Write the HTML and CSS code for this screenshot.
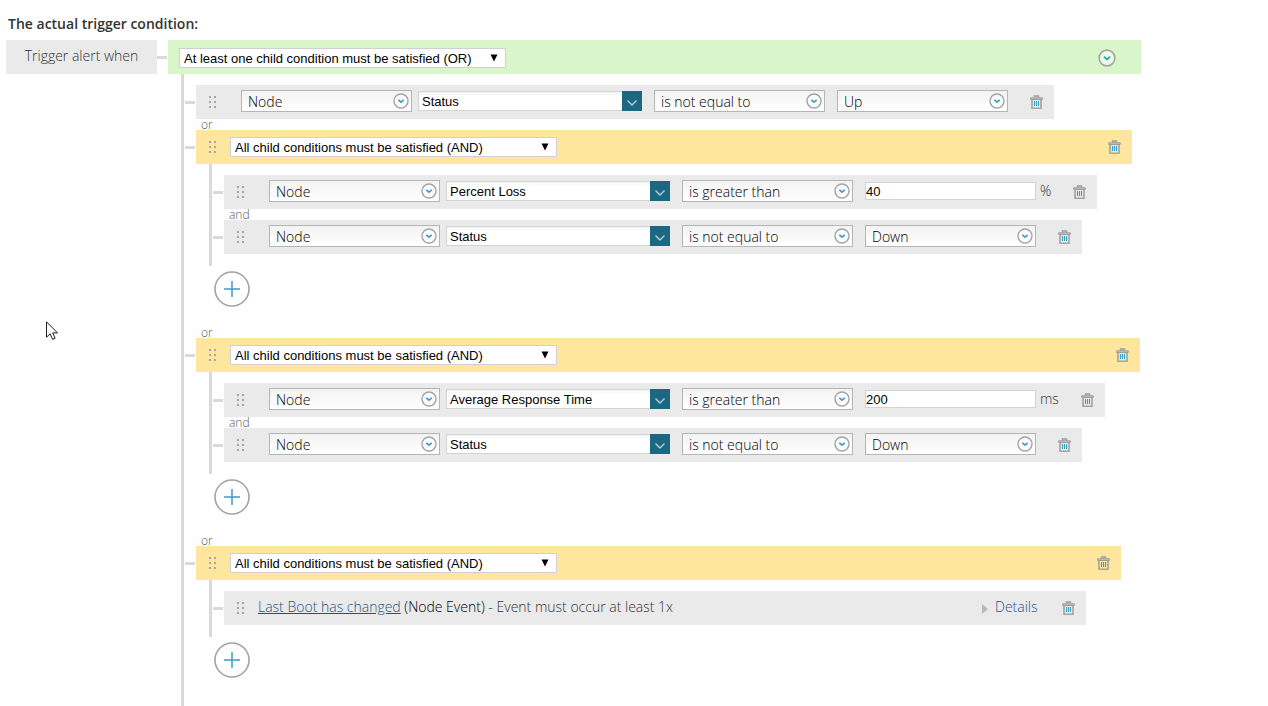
FILE: index.html
```html
<!DOCTYPE html>
<html lang="en">

<head>
    <meta charset="UTF-8">
    <meta name="viewport" content="width=device-width, initial-scale=1.0">
    <title>Trigger Condition</title>
    <link rel="stylesheet" href="styles.css">
</head>

<body>
    <!-- shared icons -->
    <svg class="icon-defs" aria-hidden="true">
        <symbol id="icon-grip" viewBox="0 0 8 12">
            <path d="M0 0h2v2h-2zM5 0h2v2h-2zM0 5h2v2h-2zM5 5h2v2h-2zM0 10h2v2h-2zM5 10h2v2h-2z" fill="#a6a6a6"/>
        </symbol>
        <symbol id="icon-circle" viewBox="0 0 16 16">
            <circle cx="8" cy="8" r="7" fill="#fff" fill-opacity="0.5" stroke="#a3a3a3" stroke-width="1.4"/>
            <path d="M5.3 6.8L8 9.2l2.7-2.4" fill="none" stroke="#3a9fc0" stroke-width="1.7"/>
        </symbol>
        <symbol id="icon-trash" viewBox="0 0 13 14">
            <path d="M4.5 2.5v-1.5h4v1.5" fill="none" stroke="#9c9c9c" stroke-width="1.4"/>
            <path d="M0.7 4.5v-1.7h11.6v1.7z" fill="#c4c4c4" stroke="#9c9c9c"/>
            <path d="M2 4.5v8.7h9v-8.7" fill="none" stroke="#a3a3a3" stroke-width="1.6"/>
            <path d="M4.5 6v5M6.5 6v5M8.5 6v5" stroke="#3a9fc0" stroke-width="1.1"/>
        </symbol>
        <symbol id="icon-plus" viewBox="0 0 36 36">
            <circle cx="18" cy="18" r="17" fill="#fff" stroke="#a3a3a3" stroke-width="1.6"/>
            <path d="M18 10v16M10 18h16" stroke="#3a9fc0" stroke-width="1.5"/>
        </symbol>
        <symbol id="icon-arrow" viewBox="0 0 8 8">
            <path d="M0.5 0.5h7L4 7.5z" fill="#000"/>
        </symbol>
        <symbol id="icon-chevron" viewBox="0 0 10 6">
            <path d="M0.5 0.5L5 5l4.5-4.5" fill="none" stroke="#b5d0da" stroke-width="1.4"/>
        </symbol>
    </svg>

    <h2 class="title">The actual trigger condition:</h2>
    <div class="condition">
        <div class="start">Trigger alert when</div>
        <div class="group root">
            <div class="group-head">
                <span class="operator">
                    <select aria-label="Root operator"><option>At least one child condition must be satisfied (OR)</option></select>
                    <svg><use href="#icon-arrow"/></svg>
                </span>
                <button class="expand" type="button" aria-label="Expand"><svg><use href="#icon-circle"/></svg></button>
            </div>
            <div class="children">
                <div class="row">
                    <span class="grip"><svg><use href="#icon-grip"/></svg></span>
                    <div class="fields">
                        <span class="field"><select aria-label="Object"><option>Node</option></select><svg><use href="#icon-circle"/></svg></span>
                        <span class="combo"><input type="text" aria-label="Property" value="Status"><button type="button" aria-label="Browse"><svg><use href="#icon-chevron"/></svg></button></span>
                        <span class="field"><select aria-label="Comparison"><option>is not equal to</option></select><svg><use href="#icon-circle"/></svg></span>
                        <span class="field"><select aria-label="Value"><option>Up</option></select><svg><use href="#icon-circle"/></svg></span>
                    </div>
                    <button class="trash" type="button" aria-label="Delete"><svg><use href="#icon-trash"/></svg></button>
                </div>

                <div class="joiner">or</div>
                <div class="group">
                    <div class="group-head">
                        <span class="grip"><svg><use href="#icon-grip"/></svg></span>
                        <span class="operator">
                            <select aria-label="Group operator"><option>All child conditions must be satisfied (AND)</option></select>
                            <svg><use href="#icon-arrow"/></svg>
                        </span>
                        <button class="trash" type="button" aria-label="Delete"><svg><use href="#icon-trash"/></svg></button>
                    </div>
                    <div class="children">
                        <div class="row">
                            <span class="grip"><svg><use href="#icon-grip"/></svg></span>
                            <div class="fields">
                                <span class="field"><select aria-label="Object"><option>Node</option></select><svg><use href="#icon-circle"/></svg></span>
                                <span class="combo"><input type="text" aria-label="Property" value="Percent Loss"><button type="button" aria-label="Browse"><svg><use href="#icon-chevron"/></svg></button></span>
                                <span class="field"><select aria-label="Comparison"><option>is greater than</option></select><svg><use href="#icon-circle"/></svg></span>
                                <label class="amount"><input type="text" value="40">%</label>
                            </div>
                            <button class="trash" type="button" aria-label="Delete"><svg><use href="#icon-trash"/></svg></button>
                        </div>
                        <div class="joiner">and</div>
                        <div class="row">
                            <span class="grip"><svg><use href="#icon-grip"/></svg></span>
                            <div class="fields">
                                <span class="field"><select aria-label="Object"><option>Node</option></select><svg><use href="#icon-circle"/></svg></span>
                                <span class="combo"><input type="text" aria-label="Property" value="Status"><button type="button" aria-label="Browse"><svg><use href="#icon-chevron"/></svg></button></span>
                                <span class="field"><select aria-label="Comparison"><option>is not equal to</option></select><svg><use href="#icon-circle"/></svg></span>
                                <span class="field"><select aria-label="Value"><option>Down</option></select><svg><use href="#icon-circle"/></svg></span>
                            </div>
                            <button class="trash" type="button" aria-label="Delete"><svg><use href="#icon-trash"/></svg></button>
                        </div>
                    </div>
                    <button class="add" type="button" aria-label="Add condition"><svg><use href="#icon-plus"/></svg></button>
                </div>

                <div class="joiner">or</div>
                <div class="group">
                    <div class="group-head">
                        <span class="grip"><svg><use href="#icon-grip"/></svg></span>
                        <span class="operator">
                            <select aria-label="Group operator"><option>All child conditions must be satisfied (AND)</option></select>
                            <svg><use href="#icon-arrow"/></svg>
                        </span>
                        <button class="trash" type="button" aria-label="Delete"><svg><use href="#icon-trash"/></svg></button>
                    </div>
                    <div class="children">
                        <div class="row">
                            <span class="grip"><svg><use href="#icon-grip"/></svg></span>
                            <div class="fields">
                                <span class="field"><select aria-label="Object"><option>Node</option></select><svg><use href="#icon-circle"/></svg></span>
                                <span class="combo"><input type="text" aria-label="Property" value="Average Response Time"><button type="button" aria-label="Browse"><svg><use href="#icon-chevron"/></svg></button></span>
                                <span class="field"><select aria-label="Comparison"><option>is greater than</option></select><svg><use href="#icon-circle"/></svg></span>
                                <label class="amount"><input type="text" value="200">ms</label>
                            </div>
                            <button class="trash" type="button" aria-label="Delete"><svg><use href="#icon-trash"/></svg></button>
                        </div>
                        <div class="joiner">and</div>
                        <div class="row">
                            <span class="grip"><svg><use href="#icon-grip"/></svg></span>
                            <div class="fields">
                                <span class="field"><select aria-label="Object"><option>Node</option></select><svg><use href="#icon-circle"/></svg></span>
                                <span class="combo"><input type="text" aria-label="Property" value="Status"><button type="button" aria-label="Browse"><svg><use href="#icon-chevron"/></svg></button></span>
                                <span class="field"><select aria-label="Comparison"><option>is not equal to</option></select><svg><use href="#icon-circle"/></svg></span>
                                <span class="field"><select aria-label="Value"><option>Down</option></select><svg><use href="#icon-circle"/></svg></span>
                            </div>
                            <button class="trash" type="button" aria-label="Delete"><svg><use href="#icon-trash"/></svg></button>
                        </div>
                    </div>
                    <button class="add" type="button" aria-label="Add condition"><svg><use href="#icon-plus"/></svg></button>
                </div>

                <div class="joiner">or</div>
                <div class="group">
                    <div class="group-head">
                        <span class="grip"><svg><use href="#icon-grip"/></svg></span>
                        <span class="operator">
                            <select aria-label="Group operator"><option>All child conditions must be satisfied (AND)</option></select>
                            <svg><use href="#icon-arrow"/></svg>
                        </span>
                        <button class="trash" type="button" aria-label="Delete"><svg><use href="#icon-trash"/></svg></button>
                    </div>
                    <div class="children">
                        <div class="row">
                            <span class="grip"><svg><use href="#icon-grip"/></svg></span>
                            <div class="event"><a href="#">Last Boot has changed</a> <span class="event-type">(Node Event)</span> - Event must occur at least 1x</div>
                            <button class="details" type="button"><svg viewBox="0 0 6 10"><path d="M0 0l6 5-6 5z" fill="#b9b9b9"/></svg>Details</button>
                            <button class="trash" type="button" aria-label="Delete"><svg><use href="#icon-trash"/></svg></button>
                        </div>
                    </div>
                    <button class="add" type="button" aria-label="Add condition"><svg><use href="#icon-plus"/></svg></button>
                </div>
            </div>
        </div>
    </div>

    <svg class="pointer" viewBox="0 0 13 20" aria-hidden="true">
        <path d="M0.5 0.8v15.4l3.6-3.4 2.5 5.6 2.5-1.1-2.4-5.4h4.8z" fill="#fff" stroke="#1c1c28"/>
    </svg>
</body>

</html>
```
FILE: styles.css
```css
* {
    box-sizing: border-box;
}

body {
    display: flex;
    flex-direction: column;
    min-height: 100vh;
    margin: 0;
    padding: 14px 6px 0;
    background-color: #fff;
    color: #333;
    font-family: "Open Sans", sans-serif;
    font-size: 14px;
    font-weight: 300;
    line-height: 20px;
}

button {
    padding: 0;
    border: none;
    background: none;
    font: inherit;
    cursor: pointer;
}

svg {
    display: block;
}

.icon-defs {
    position: absolute;
    width: 0;
    height: 0;
}

.title {
    margin: 0 2px 6px;
    color: #333;
    font-size: 14px;
    font-weight: 600;
}

.condition {
    display: flex;
    flex: 1;
}

.start {
    width: 151px;
    height: 34px;
    flex-shrink: 0;
    line-height: 32px;
    text-align: center;
    background-color: #eaeaea;
}

/* tree */
.group {
    width: fit-content;
    margin-bottom: 20px;
}

.root {
    display: flex;
    flex-direction: column;
    margin: 0 0 0 11px;
}

.group-head,
.row {
    display: flex;
    align-items: center;
    height: 34px;
}

.group-head {
    background-color: #ffe69e;
}

.root > .group-head {
    padding: 2px 25px 0 11px;
    background-color: #d9f6cb;
}

.row {
    width: fit-content;
    background-color: #eaeaea;
}

/* short line that ties a row to the trunk on its left */
.group-head::before,
.row::before {
    content: "";
    align-self: flex-start;
    flex-shrink: 0;
    width: 10px;
    height: 3px;
    margin: 16px 1px 0 -11px;
    background-color: #d9d9d9;
}

.root > .group-head::before {
    margin: 14px 12px 0 -22px;
}

.children {
    margin: 0 35px 0 13px;
    padding: 11px 0 12px 12px;
    border-left: 3px solid #d9d9d9;
}

.root > .children {
    flex: 1;
    margin-right: 1px;
    padding-bottom: 0;
}

.joiner {
    padding-left: 5px;
    color: #555;
    font-size: 12px;
    line-height: 11px;
}

.add {
    display: block;
    margin: 5px 0 0 18px;
}

.add svg {
    width: 36px;
    height: 36px;
}

.grip,
.trash {
    display: flex;
    flex-shrink: 0;
    align-items: center;
    justify-content: center;
    width: 34px;
    height: 34px;
}

.grip svg {
    width: 8px;
    height: 12px;
}

.trash {
    padding-right: 1px;
}

.trash svg {
    width: 13px;
    height: 14px;
}

.group-head .trash,
.expand {
    margin-left: auto;
}

.expand svg {
    width: 18px;
    height: 18px;
}

/* controls */
select,
input {
    margin: 0;
    color: #000;
    font-family: "Liberation Sans", Arial, sans-serif;
    font-size: 13px;
    appearance: none;
    border-radius: 0;
}

.operator,
.field {
    position: relative;
    display: block;
}

.operator svg {
    position: absolute;
    top: 6px;
    right: 8px;
    width: 8px;
    height: 8px;
    pointer-events: none;
}

.operator select {
    display: block;
    width: 327px;
    height: 20px;
    padding: 0 4px;
    border: 1px solid #d0d0d0;
    background-color: #fff;
}

.fields {
    display: flex;
    align-items: center;
    padding: 0 12px 2px 11px;
}

.field {
    margin-left: 12px;
}

.field:first-child {
    margin-left: 0;
}

.field select {
    display: block;
    width: 171px;
    height: 22px;
    padding: 0 6px;
    border: 1px solid #b5b5b5;
    background: linear-gradient(#f3f3f3, #fff);
    font-family: "Open Sans", sans-serif;
    font-size: 14px;
    font-weight: 300;
}

.field svg {
    position: absolute;
    top: 3px;
    right: 3px;
    width: 16px;
    height: 16px;
    pointer-events: none;
}

.combo {
    display: flex;
    width: 224px;
    height: 20px;
    margin-left: 6px;
}

.combo input {
    flex: 1;
    min-width: 0;
    padding: 0 3px;
    border: 1px solid #d3d3d3;
    border-right: none;
    background: linear-gradient(#f3f5f5, #fff 5px);
}

.combo button {
    display: flex;
    align-items: center;
    justify-content: center;
    width: 20px;
    padding-top: 4px;
    background-color: #1c6781;
}

.combo svg {
    width: 10px;
    height: 6px;
}

.amount {
    display: flex;
    align-items: center;
    margin-left: 12px;
}

.amount input {
    width: 171px;
    height: 18px;
    margin-right: 4px;
    padding: 0;
    border: 1px solid #d3d3d3;
    background-color: #fff;
}

.event {
    width: 724px;
    padding-bottom: 2px;
}

.event a {
    color: #1f5488;
}

.event-type {
    color: #000;
}

.details {
    display: flex;
    align-items: center;
    gap: 7px;
    margin-right: 14px;
    padding-bottom: 2px;
    color: #1f5488;
}

.details svg {
    width: 6px;
    height: 10px;
    margin-top: 4px;
}

.pointer {
    position: absolute;
    top: 321px;
    left: 46px;
    width: 13px;
    height: 20px;
}
```
